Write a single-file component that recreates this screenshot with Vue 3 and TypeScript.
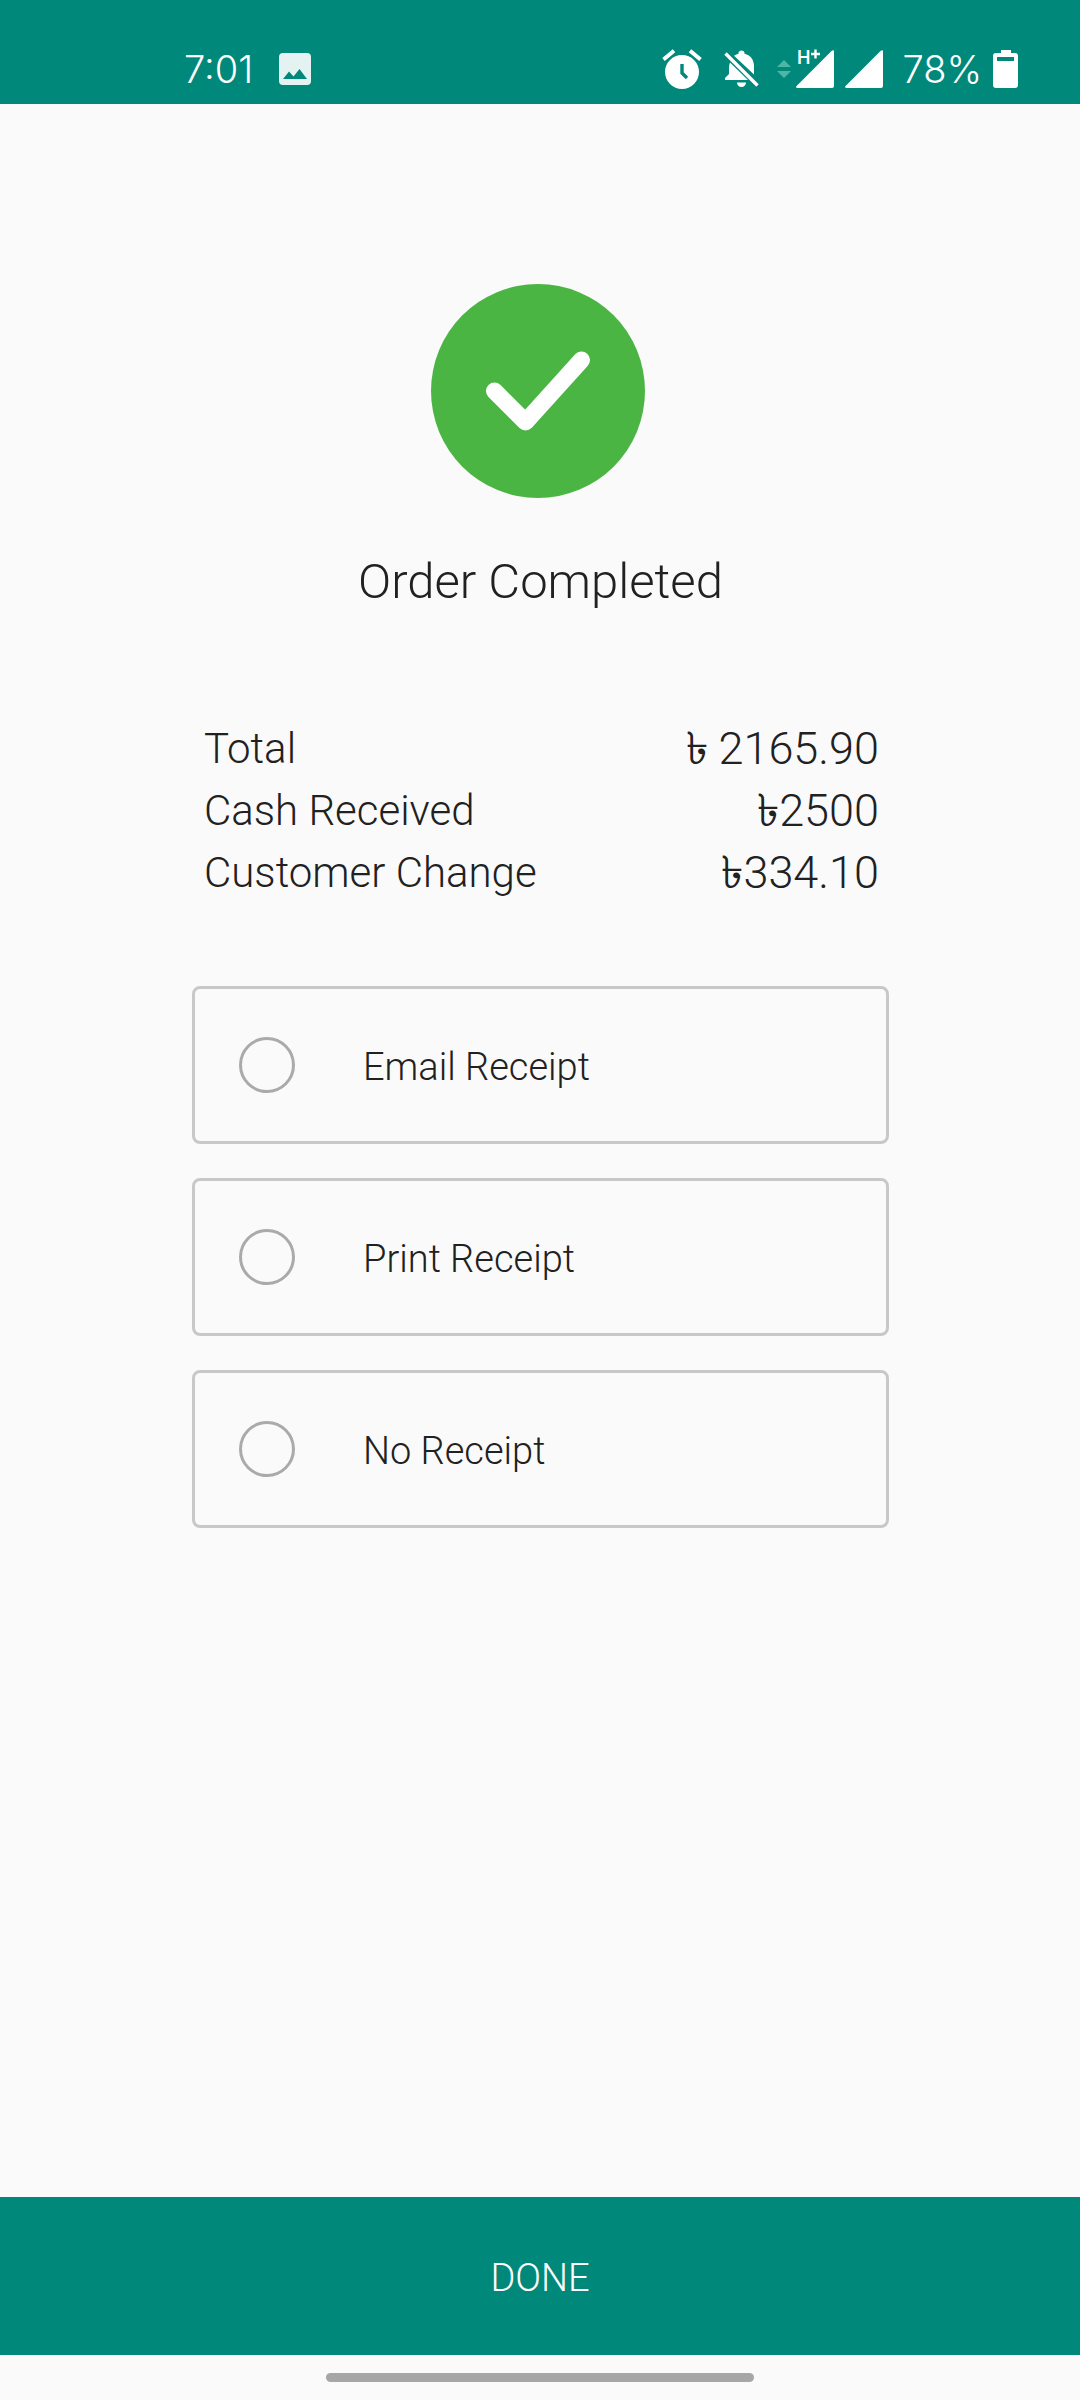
<script setup lang="ts">
import { ref } from 'vue'

interface Amount {
  label: string
  value: string
}

interface ReceiptOption {
  id: string
  label: string
}

const amounts: Amount[] = [
  { label: 'Total', value: '৳ 2165.90' },
  { label: 'Cash Received', value: '৳2500' },
  { label: 'Customer Change', value: '৳334.10' },
]

const options: ReceiptOption[] = [
  { id: 'email', label: 'Email Receipt' },
  { id: 'print', label: 'Print Receipt' },
  { id: 'none', label: 'No Receipt' },
]

const receipt = ref<string>('')
</script>

<template>
  <div class="screen">
    <header class="status">
      <div class="status-group">
        <span class="status-text">7:01</span>
        <svg class="picture" width="32" height="32" viewBox="0 0 32 32" aria-hidden="true">
          <path fill="#e4f2f1" fill-rule="evenodd" d="M4 0H28A4 4 0 0 1 32 4V28A4 4 0 0 1 28 32H4A4 4 0 0 1 0 28V4A4 4 0 0 1 4 0ZM4 26H28L20.500 16L14.500 23.500L10 18.500Z" />
        </svg>
      </div>
      <div class="status-group">
        <svg width="40" height="40" viewBox="0 0 40 40" aria-hidden="true">
          <path fill="none" stroke="#fff" stroke-width="4" d="M1.500 10.500L12 1.800M28 1.800L38.500 10.500" />
          <circle cx="20" cy="23" r="17" fill="#fff" />
          <path fill="none" stroke="#00897b" stroke-width="3.400" d="M20 15V24L25 29" />
        </svg>
        <svg class="bell" width="36" height="40" viewBox="0 0 36 40" aria-hidden="true">
          <path fill="#fff" d="M6 13.500C4.800 16 5 20 5 25L1 29V31H24ZM10 6.800C11.500 5.800 13 5.200 14.500 4.800V3.500A3.200 3.200 0 0 1 20.500 3.500V4.800C27 6 30 11.500 30 17V25.500ZM13 33.500H22A4.500 4.500 0 0 1 13 33.500Z" />
          <path fill="none" stroke="#fff" stroke-width="3.400" d="M1.500 4.500L33.500 36.500" />
        </svg>
        <svg class="mobile" width="58" height="52" viewBox="0 -6 58 52" aria-hidden="true">
          <path fill="#4db6a5" d="M0 18L7 11L14 18ZM0 22H14L7 29Z" />
          <path fill="#fff" d="M20.500 39C19 39 18.600 38 19.600 37L54.500 2C56 .6 57 1.200 57 2.500V37A2 2 0 0 1 55 39Z" />
          <text x="20" y="15" fill="#fff" font-family="Inter, sans-serif" font-size="18" font-weight="600">H</text>
          <path fill="none" stroke="#fff" stroke-width="2.400" d="M34 5H43M38.500 .5V9.500" />
        </svg>
        <svg class="signal" width="39" height="40" viewBox="0 0 39 40" aria-hidden="true">
          <path fill="#fff" d="M1.500 39C0 39 -.4 38 .6 37L35.500 2C37 .6 38 1.200 38 2.500V37A2 2 0 0 1 36 39Z" />
        </svg>
        <span class="status-text">78%</span>
        <svg class="battery" width="26" height="40" viewBox="0 0 26 40" aria-hidden="true">
          <path fill="#fff" fill-rule="evenodd" d="M8 1H18V4H22A3 3 0 0 1 25 7V36A3 3 0 0 1 22 39H3A3 3 0 0 1 0 36V7A3 3 0 0 1 3 4H8ZM4 8V12H21V8Z" />
        </svg>
      </div>
    </header>

    <main class="content">
      <svg class="badge" width="220" height="214" viewBox="0 0 220 214" aria-hidden="true">
        <circle cx="107" cy="107" r="107" fill="#4bb543" />
        <path fill="none" stroke="#fff" stroke-width="17" stroke-linecap="round" stroke-linejoin="round" d="M63.500 107L94.500 138L150.500 76" />
      </svg>
      <h1>Order Completed</h1>

      <table class="amounts">
        <tbody>
          <tr v-for="row in amounts" :key="row.label">
            <th scope="row">{{ row.label }}</th>
            <td>{{ row.value }}</td>
          </tr>
        </tbody>
      </table>

      <div class="options" role="radiogroup" aria-label="Receipt">
        <label v-for="option in options" :key="option.id" class="option" :for="option.id">
          <input :id="option.id" v-model="receipt" type="radio" name="receipt" :value="option.id" />
          <span>{{ option.label }}</span>
        </label>
      </div>
    </main>

    <button class="done" type="button">DONE</button>
    <div class="gesture"><span class="pill"></span></div>
  </div>
</template>

<style>
body {
  background: #fafafa;
}
</style>

<style scoped>
.screen {
  display: flex;
  flex-direction: column;
  min-height: 100vh;
  background: #fafafa;
  color: #212121;
  font-family: Roboto, "Noto Sans", sans-serif;
  font-weight: 300;
}

.status {
  display: flex;
  justify-content: space-between;
  align-items: center;
  box-sizing: border-box;
  height: 104px;
  padding: 34px 61px 0 184px;
  background: #00897b;
}

.status-group {
  display: flex;
  align-items: center;
}

.status-text {
  color: #fff;
  font-family: Inter, "Liberation Sans", sans-serif;
  font-size: 38px;
  line-height: 40px;
}

.picture {
  margin-left: 26px;
}

.bell {
  margin-left: 22px;
}

.mobile {
  margin-left: 17px;
}

.signal {
  margin: 0 18px 0 10px;
}

.battery {
  margin-left: 11px;
}

.content {
  display: flex;
  flex: 1;
  flex-direction: column;
  align-items: center;
  padding: 180px 191px 40px 192px;
}

h1 {
  margin: 52px 0 0;
  font-size: 49px;
  font-weight: inherit;
  line-height: 64px;
}

.amounts {
  width: 100%;
  margin-top: 104px;
  border-collapse: collapse;
  line-height: 62px;
}

.amounts th {
  padding: 0 0 0 12px;
  font-size: 42px;
  font-weight: inherit;
  text-align: left;
}

.amounts td {
  padding: 0 10px 0 0;
  font-size: 45px;
  text-align: right;
}

.options {
  display: flex;
  flex-direction: column;
  gap: 34px;
  width: 100%;
  margin-top: 82px;
}

.option {
  display: flex;
  align-items: center;
  gap: 68px;
  box-sizing: border-box;
  height: 158px;
  padding: 0 44px;
  border: 3px solid #c8c8c8;
  border-radius: 8px;
  font-size: 38px;
  line-height: 48px;
}

.option span {
  padding-top: 3px;
}

.option input {
  flex: none;
  width: 56px;
  height: 56px;
  margin: 0;
  border: 3px solid #aaa;
  border-radius: 50%;
  appearance: none;
}

.option input:checked {
  border: 16px solid #00897b;
}

.done {
  height: 158px;
  padding: 3px 0 0;
  border: 0;
  background: #00897b;
  color: #fff;
  font: inherit;
  font-size: 38px;
}

.gesture {
  display: flex;
  justify-content: center;
  padding: 18px 0;
}

.pill {
  width: 428px;
  max-width: 60%;
  height: 9px;
  border-radius: 5px;
  background: #a6a6a6;
}
</style>
